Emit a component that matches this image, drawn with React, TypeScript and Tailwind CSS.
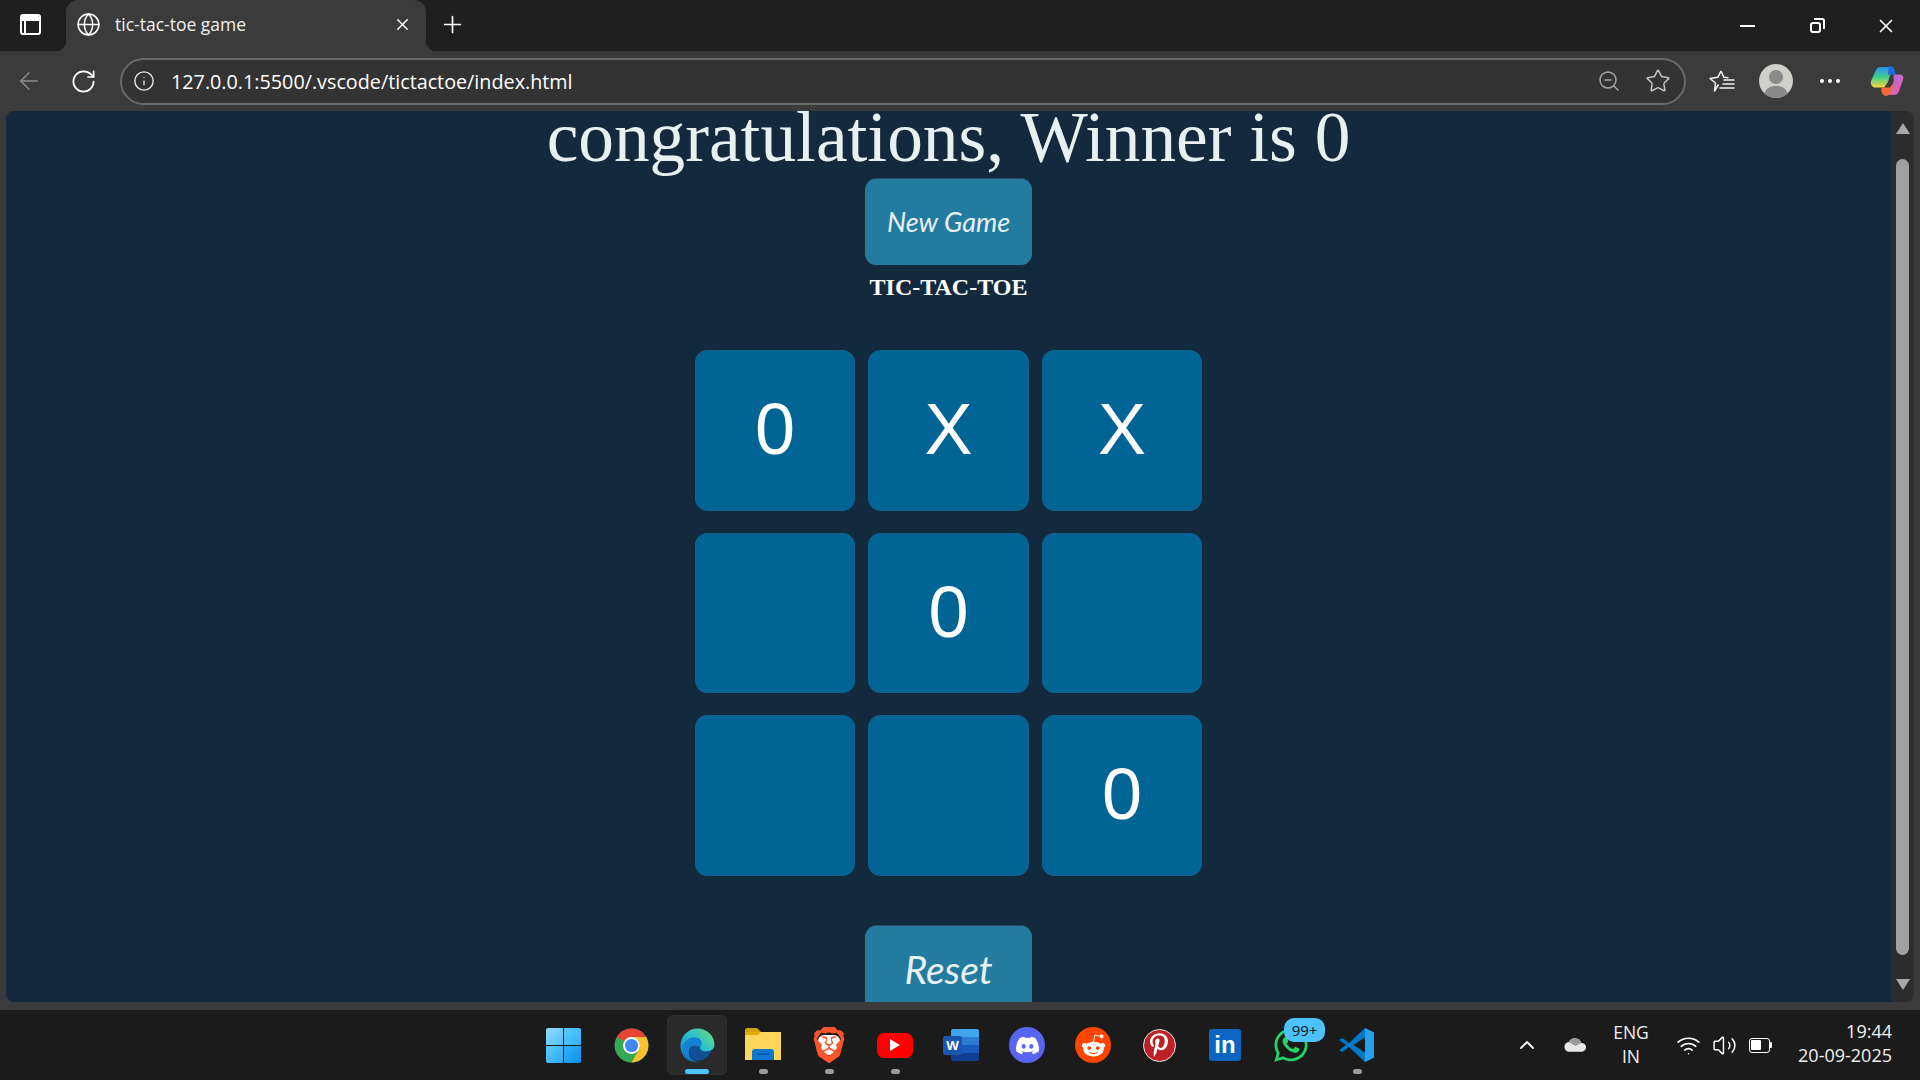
import { ArrowLeft, ChevronUp, Globe, Info, Plus, RotateCw, Star, Volume2, Wifi, X, ZoomOut } from "lucide-react";
import { FaDiscord, FaPinterestP, FaRedditAlien, FaWhatsapp } from "react-icons/fa";
import { SiBrave } from "react-icons/si";

const board = ["0", "X", "X", "", "0", "", "", "", "0"];

function WindowsLogo() {
  return (
    <div className="mr-[4px] grid h-[35px] w-[35px] grid-cols-2 gap-[1px]">
      <span className="rounded-tl-[2px] bg-gradient-to-br from-[#8fdcff] to-[#4fc0fa]" />
      <span className="rounded-tr-[2px] bg-gradient-to-br from-[#5ccaff] to-[#2fb0f8]" />
      <span className="rounded-bl-[2px] bg-gradient-to-br from-[#58c8fd] to-[#2cadf7]" />
      <span className="rounded-br-[2px] bg-gradient-to-br from-[#2fb2fa] to-[#0f91f0]" />
    </div>
  );
}

function ChromeLogo() {
  return (
    <svg viewBox="0 0 48 48" className="h-[37px] w-[37px]">
      <circle cx="24" cy="24" r="22" fill="#34a853" />
      <path d="M24 2a22 22 0 0 1 19 11H24a11 11 0 0 0-9.500 5.500L5 13A22 22 0 0 1 24 2z" fill="#ea4335" />
      <path d="M43 13a22 22 0 0 1-19 33l9.500-16.500A11 11 0 0 0 33.500 18.500 11 11 0 0 0 24 13z" fill="#fbc02d" />
      <circle cx="24" cy="24" r="11" fill="#fff" />
      <circle cx="24" cy="24" r="8.500" fill="#4285f4" />
    </svg>
  );
}

function EdgeLogo() {
  return (
    <svg viewBox="0 0 48 48" className="h-[37px] w-[37px]">
      <defs>
        <linearGradient id="edgeTop" x1="0" y1="1" x2="1" y2="0">
          <stop offset="0" stopColor="#0c7fd0" />
          <stop offset="0.55" stopColor="#2bbfd2" />
          <stop offset="1" stopColor="#6ee06a" />
        </linearGradient>
      </defs>
      <path d="M24 2C36 2 46 11 46 23c0 6-5 9-11 9-5 0-8-2-8-5 0-2 2-3 2-6 0-5-5-8-11-7C10 15 5 22 5 30c0 6 4 13 12 16C8 44 2 34 2 24 2 12 12 2 24 2z" fill="url(#edgeTop)" />
      <path d="M5 30c0-8 5-15 13-16 6-1 11 2 11 7 0 3-2 4-2 6-5-5-16-3-14 9 1 6 8 10 15 10h-3C13 45 5 39 5 30z" fill="#1482d6" />
      <path d="M13 36c-1-12 9-14 14-9 0 3 3 5 8 5 3 0 6-1 8-3-3 9-11 15-19 15-5 0-10-3-11-8z" fill="#0f4f94" />
    </svg>
  );
}

function ExplorerLogo() {
  return (
    <svg viewBox="0 0 38 36" className="h-[36px] w-[38px]">
      <path d="M1 3a2 2 0 0 1 2-2h10l4 4h-16z" fill="#d6a100" />
      <path d="M1 5h36v28H1z" fill="#ffd65c" />
      <path d="M1 5h16l-3 3H1z" fill="#e0ad10" />
      <path d="M8 33v-8a3 3 0 0 1 3-3h16a3 3 0 0 1 3 3v8z" fill="#0d78d0" />
      <path d="M13 27h12" stroke="#0a4f94" strokeWidth="1.400" />
    </svg>
  );
}

function BraveLogo() {
  return (
    <span className="relative flex items-center justify-center">
      <span className="absolute h-[20px] w-[22px] rounded-[6px] bg-white" />
      <SiBrave size={36} color="#fb542b" className="relative" />
    </span>
  );
}

function YoutubeLogo() {
  return (
    <div className="flex h-[25px] w-[36px] items-center justify-center rounded-[7px] bg-[#fe0000]">
      <span className="h-0 w-0 border-y-[6px] border-l-[10px] border-y-transparent border-l-white" />
    </div>
  );
}

function WordLogo() {
  return (
    <div className="relative h-[32px] w-[36px]">
      <div className="ml-[8px] flex h-[32px] w-[28px] flex-col overflow-hidden rounded-[2px]">
        <span className="flex-1 bg-[#41a5ee]" />
        <span className="flex-1 bg-[#2b7cd3]" />
        <span className="flex-1 bg-[#185abd]" />
        <span className="flex-1 bg-[#103f91]" />
      </div>
      <span className="absolute left-0 top-[7px] flex h-[19px] w-[19px] items-center justify-center rounded-[2px] bg-[#1a56b0] font-['Open_Sans',sans-serif] text-[13px] font-bold leading-none text-white">
        W
      </span>
    </div>
  );
}

function VscodeLogo() {
  return (
    <svg viewBox="0 0 36 36" className="h-[36px] w-[36px]">
      <path d="M26 1l9 4.500v25L26 35 10 20l-6.500 5L0 23l7-5-7-5 3.500-2L10 16z" fill="#0078c8" />
      <path d="M26 1l9 4.500v25L26 35z" fill="#24a0ed" />
      <path d="M26 10.500L14.500 18 26 25.500z" fill="#1a1a1a" />
    </svg>
  );
}

function FavoritesIcon() {
  return (
    <svg viewBox="0 0 26 24" className="h-[24px] w-[26px]" fill="none" stroke="#f2f2f2" strokeWidth="1.500" strokeLinejoin="round">
      <path d="M12 2l2.800 6.200 4.700.600M9.500 15.500L5.500 22l1-8L1 9.500 8.800 8.300 12 2" />
      <path d="M15 11h10M14 15h11M11 19h14" strokeLinecap="round" />
    </svg>
  );
}

function CopilotLogo() {
  return (
    <svg viewBox="0 0 36 34" className="h-[32px] w-[34px]">
      <defs>
        <linearGradient id="copLeft" x1="0" y1="0" x2="0" y2="1">
          <stop offset="0" stopColor="#2a8cf0" />
          <stop offset="0.5" stopColor="#3fd08a" />
          <stop offset="1" stopColor="#ffd83a" />
        </linearGradient>
        <linearGradient id="copRight" x1="0" y1="0" x2="1" y2="1">
          <stop offset="0" stopColor="#a56bf0" />
          <stop offset="1" stopColor="#f0609a" />
        </linearGradient>
      </defs>
      <path d="M11 2h13l-5 16-4 6H6c-4 0-6-4-5-7L6 6c1-3 3-4 5-4z" fill="url(#copLeft)" />
      <path d="M20 1c3 0 5 1 6 4l1 5h-8z" fill="#1b6fe0" />
      <path d="M25 10h7c3 0 4 3 3 6l-4 11c-1 3-3 5-6 5H20l5-14z" fill="url(#copRight)" />
      <path d="M12 24h9l5-6-3 10c-1 3-3 5-6 5-3 0-4-2-5-5z" fill="#f4683c" />
    </svg>
  );
}

function TaskIcon({ children, dot, active }: { children: React.ReactNode; dot?: boolean; active?: boolean }) {
  return (
    <div className="relative flex h-[60px] w-[66px] items-center justify-center">
      {active && <span className="absolute inset-x-[3px] inset-y-0 rounded-[6px] border border-[#303030] bg-[#2a2a2a]" />}
      <span className="relative flex items-center justify-center">{children}</span>
      {dot && <span className="absolute bottom-[1px] h-[5px] w-[9px] rounded-full bg-[#9b9b9b]" />}
      {active && <span className="absolute bottom-[1px] h-[5px] w-[24px] rounded-full bg-[#4cc2ff]" />}
    </div>
  );
}

export default function App() {
  return (
    <div className="flex h-[1080px] w-[1920px] flex-col overflow-hidden bg-[#3b3b3b] font-['Open_Sans',sans-serif]">
      {/* Tab strip */}
      <div className="flex h-[51px] items-stretch overflow-hidden bg-[#1f1f1f] text-white">
        <div className="flex w-[60px] items-center justify-center pb-[2px]">
          <div className="flex h-[21px] w-[21px] flex-col overflow-hidden rounded-[3px] border-2 border-white">
            <span className="h-[5px] bg-white" />
            <span className="w-[4px] flex-1 border-r-2 border-white" />
          </div>
        </div>
        <div className="relative ml-[6px] flex w-[360px] items-center rounded-t-[12px] bg-[#3b3b3b] pb-[2px] pl-[10px] pr-[14px]">
          <span className="absolute bottom-0 left-[-10px] h-[10px] w-[10px] rounded-br-[10px] shadow-[4px_4px_0_0_#3b3b3b]" />
          <span className="absolute bottom-0 right-[-10px] h-[10px] w-[10px] rounded-bl-[10px] shadow-[-4px_4px_0_0_#3b3b3b]" />
          <Globe size={25} strokeWidth={1.400} />
          <span className="ml-[14px] flex-1 text-[17.500px] text-[#f0f0f0]">tic-tac-toe game</span>
          <X size={19} strokeWidth={1.800} />
        </div>
        <div className="flex w-[52px] items-center justify-center pb-[3px]">
          <Plus size={27} strokeWidth={1.500} />
        </div>
        <div className="ml-auto flex">
          <div className="flex w-[70px] items-center justify-center">
            <span className="h-[2px] w-[15px] bg-white" />
          </div>
          <div className="flex w-[70px] items-center justify-center">
            <span className="relative h-[15px] w-[15px]">
              <span className="absolute bottom-0 left-0 h-[11px] w-[11px] rounded-[3px] border-2 border-white" />
              <span className="absolute right-0 top-0 h-[11px] w-[11px] rounded-tr-[3px] border-r-2 border-t-2 border-white" />
            </span>
          </div>
          <div className="flex w-[68px] items-center justify-center">
            <X size={22} strokeWidth={1.800} />
          </div>
        </div>
      </div>

      {/* Toolbar */}
      <div className="flex h-[60px] items-center pl-[7px] text-white">
        <div className="flex w-[44px] justify-center text-[#8d8d8d]">
          <ArrowLeft size={28} strokeWidth={1.200} />
        </div>
        <div className="ml-[10px] flex w-[44px] justify-center">
          <RotateCw size={27} strokeWidth={1.500} />
        </div>
        <div className="ml-[15px] flex h-[47px] w-[1566px] items-center rounded-full border-2 border-[#6a6a6a] bg-[#333333] pl-[11px] pr-[13px]">
          <Info size={22} strokeWidth={1.500} className="text-[#e8e8e8]" />
          <span className="ml-[16px] flex-1 pt-[1px] text-[19.750px] text-white">127.0.0.1:5500/.vscode/tictactoe/index.html</span>
          <ZoomOut size={24} strokeWidth={1.400} className="text-[#a8a8a8]" />
          <Star size={26} strokeWidth={1.400} className="ml-[24px] text-[#c4c4c4]" />
        </div>
        <div className="ml-[9px] flex w-[54px] justify-center">
          <FavoritesIcon />
        </div>
        <div className="flex w-[54px] justify-center">
          <div className="relative h-[34px] w-[34px] overflow-hidden rounded-full bg-[#d0cfcb]">
            <span className="absolute left-[10px] top-[6px] h-[14px] w-[14px] rounded-full bg-[#8a8a8a]" />
            <span className="absolute left-[5px] top-[22px] h-[20px] w-[24px] rounded-full bg-[#8a8a8a]" />
          </div>
        </div>
        <div className="flex w-[54px] justify-center gap-[4px]">
          <span className="h-[4px] w-[4px] rounded-full bg-white" />
          <span className="h-[4px] w-[4px] rounded-full bg-white" />
          <span className="h-[4px] w-[4px] rounded-full bg-white" />
        </div>
        <div className="ml-[3px] flex w-[54px] justify-center">
          <CopilotLogo />
        </div>
      </div>

      {/* Page viewport */}
      <div className="ml-[6px] mr-[6px] flex h-[891px] overflow-hidden rounded-[8px]">
        <main className="flex w-[1885px] flex-col items-center overflow-hidden bg-[#13293d] font-['Liberation_Serif',serif]">
          <h1 className="whitespace-nowrap text-[71.300px] font-normal leading-[52px] text-[#e8f1f2]">congratulations, Winner is 0</h1>
          <button className="mt-[15px] h-[88px] w-[169px] shrink-0 rounded-[12px] border border-[#1a2a38] border-t-[#2c4a5e] bg-[#247ba0] font-['Lato',sans-serif] text-[27px] italic text-[#e8f1f2]">
            New Game
          </button>
          <h2 className="mt-[9px] text-[24px] font-bold leading-[24px] text-white">TIC-TAC-TOE</h2>
          <div className="mt-[51px] grid shrink-0 grid-cols-[160px_161px_160px] gap-x-[13px] gap-y-[22px]">
            {board.map((cell, i) => (
              <button
                key={i}
                className="flex h-[160.500px] items-center justify-center rounded-[12px] border border-[#12618c] bg-[#006494] pb-[2px] font-['Liberation_Sans',sans-serif] text-[72px] leading-none text-white"
              >
                {cell}
              </button>
            ))}
          </div>
          <button className="mt-[49.500px] h-[88px] w-[169px] shrink-0 rounded-[12px] border border-[#1a2a38] border-t-[#2c4a5e] bg-[#247ba0] font-['Lato',sans-serif] text-[39px] italic text-[#e8f1f2]">
            Reset
          </button>
        </main>
        <div className="flex w-[23px] flex-col items-center rounded-r-[8px] bg-[#2c2c2c] pt-[12px]">
          <span className="h-0 w-0 border-x-[7px] border-b-[11px] border-x-transparent border-b-[#a8a8a8]" />
          <span className="mt-[25px] h-[796px] w-[13px] rounded-full bg-[#a0a0a0]" />
          <span className="mt-[24px] h-0 w-0 border-x-[7px] border-t-[11px] border-x-transparent border-t-[#a8a8a8]" />
        </div>
      </div>

      {/* Taskbar */}
      <footer className="mt-auto flex h-[70px] items-center bg-[#1b1b1b] pl-[532px] text-white">
        <TaskIcon><WindowsLogo /></TaskIcon>
        <TaskIcon><ChromeLogo /></TaskIcon>
        <TaskIcon active><EdgeLogo /></TaskIcon>
        <TaskIcon dot><ExplorerLogo /></TaskIcon>
        <TaskIcon dot><BraveLogo /></TaskIcon>
        <TaskIcon dot><YoutubeLogo /></TaskIcon>
        <TaskIcon><WordLogo /></TaskIcon>
        <TaskIcon>
          <div className="flex h-[36px] w-[36px] items-center justify-center rounded-full bg-[#5865f2]">
            <FaDiscord size={25} color="#fff" />
          </div>
        </TaskIcon>
        <TaskIcon>
          <div className="flex h-[36px] w-[36px] items-center justify-center rounded-full bg-[#ff4500]">
            <FaRedditAlien size={25} color="#fff" />
          </div>
        </TaskIcon>
        <TaskIcon>
          <div className="flex h-[33px] w-[33px] items-center justify-center rounded-full border border-[#e8e8e8] bg-[#bd2126]">
            <FaPinterestP size={24} color="#fff" />
          </div>
        </TaskIcon>
        <TaskIcon>
          <div className="flex h-[32px] w-[32px] items-center justify-center rounded-[3px] bg-[#0a66c2] font-['Liberation_Sans',sans-serif] text-[24px] font-bold leading-none text-white">
            in
          </div>
        </TaskIcon>
        <TaskIcon>
          <FaWhatsapp size={38} color="#25d366" />
          <span className="absolute left-[12px] top-[-8px] flex h-[24px] w-[41px] items-center justify-center rounded-[10px] bg-[#4cc2ff] text-[15px] leading-none text-[#111]">
            99+
          </span>
        </TaskIcon>
        <TaskIcon dot><VscodeLogo /></TaskIcon>

        <div className="ml-[119px] flex w-[36px] justify-center">
          <ChevronUp size={24} strokeWidth={1.800} />
        </div>
        <div className="ml-[12px] flex w-[36px] justify-center">
          <svg viewBox="0 0 26 16" className="h-[16px] w-[25px]">
            <path d="M7 15a5 5 0 0 1-1-10 7 7 0 0 1 13 1 4.500 4.500 0 0 1 1 9z" fill="#e8e8e8" />
            <path d="M6 5a7 7 0 0 1 13 1l-6 3z" fill="#9a9a9a" />
          </svg>
        </div>
        <div className="ml-[18px] mb-[3px] flex w-[40px] flex-col items-center text-[17.500px] leading-[24px] text-[#f0f0f0]">
          <span>ENG</span>
          <span>IN</span>
        </div>
        <div className="ml-[19px] flex w-[36px] justify-center">
          <Wifi size={25} strokeWidth={1.500} />
        </div>
        <div className="flex w-[36px] justify-center">
          <Volume2 size={25} strokeWidth={1.400} />
        </div>
        <div className="flex w-[36px] justify-center">
          <div className="flex items-center">
            <div className="flex h-[15px] w-[21px] items-center rounded-[3px] border-[1.500px] border-white p-[1.500px]">
              <span className="h-full w-[10px] rounded-[1px] bg-white" />
            </div>
            <span className="h-[6px] w-[2px] rounded-r-[1px] bg-white" />
          </div>
        </div>
        <div className="ml-[4px] mb-[4px] flex w-[110px] flex-col items-end whitespace-nowrap text-[18px] leading-[24px] text-[#f0f0f0]">
          <span>19:44</span>
          <span>20-09-2025</span>
        </div>
      </footer>
    </div>
  );
}
